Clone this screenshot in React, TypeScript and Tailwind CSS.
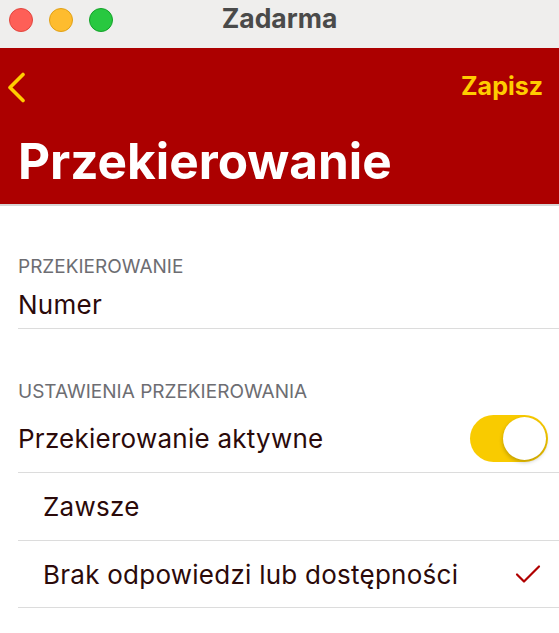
import React from 'react';

// Forwarding settings screen (macOS Catalyst window chrome + iOS style grouped list)

const OPTIONS = [
	{ label: 'Zawsze', checked: false, h: 'h-[68px]' },
	{ label: 'Brak odpowiedzi lub dostępności', checked: true, h: 'h-[67px]' },
];

function Chevron() {
	return (
		<svg width="20" height="31" viewBox="0 0 20 31" fill="none">
			<path d="M17 2.5L4 15.5L17 28.5" stroke="#ffcc00" strokeWidth="3.6" strokeLinecap="round" strokeLinejoin="round" />
		</svg>
	);
}

function Check() {
	return (
		<svg width="26" height="20" viewBox="0 0 26 20" fill="none">
			<path d="M2 10.5L9 17.5L24 2.5" stroke="#b00000" strokeWidth="2.2" strokeLinecap="round" strokeLinejoin="round" />
		</svg>
	);
}

function Toggle({ on }: { on: boolean }) {
	return (
		<div className={`flex h-[47px] w-[78px] items-center rounded-full p-[2px] ${on ? 'justify-end bg-[#f9cb00]' : 'justify-start bg-[#e5e5ea]'}`}>
			<div className="h-[43px] w-[43px] rounded-full bg-white shadow-[0_2px_4px_rgba(0,0,0,0.25)]" />
		</div>
	);
}

export default function App() {
	return (
		<div className="h-[633px] w-full overflow-hidden bg-white font-['Inter',sans-serif]">
			<div className="grid h-[48px] grid-cols-[1fr_auto_1fr] items-start bg-[#efeeed]">
				<div className="flex gap-[16px] pl-[9px] pt-[8px]">
					<span className="h-[24px] w-[24px] rounded-full border border-[#e2463f] bg-[#fe5f57]" />
					<span className="h-[24px] w-[24px] rounded-full border border-[#e1a116] bg-[#febc2e]" />
					<span className="h-[24px] w-[24px] rounded-full border border-[#13a229] bg-[#28c840]" />
				</div>
				<div className="pt-[2px] text-[26.5px] font-bold leading-[32px] text-[#4a4a4a]">Zadarma</div>
				<div />
			</div>

			<div className="border-b-2 border-[#d6d6d6] bg-[#ac0000]">
				<div className="flex h-[78px] items-center justify-between pl-[6px] pr-[16px]">
					<Chevron />
					<span className="text-[25px] font-bold text-[#ffcc00]">Zapisz</span>
				</div>
				<h1 className="h-[78px] pl-[18px] pt-[6px] text-[49.5px] font-bold leading-[58px] text-white">Przekierowanie</h1>
			</div>

			<div className="pl-[18px] text-[26px] tracking-[0.25px] text-[#2b0a0a]">
				<div className="pt-[50px] text-[19px] leading-[22px] tracking-normal text-[#6d6d72]">PRZEKIEROWANIE</div>
				<div className="flex h-[51px] items-center border-b border-[#dcdcdc] pt-[3px]">Numer</div>

				<div className="pt-[52px] text-[19px] leading-[22px] tracking-normal text-[#6d6d72]">USTAWIENIA PRZEKIEROWANIA</div>
				<div className="flex h-[70px] items-center justify-between border-b border-[#dcdcdc] pr-[11px] pt-[2px]">
					<span>Przekierowanie aktywne</span>
					<Toggle on />
				</div>

				{OPTIONS.map((o) => (
					<div key={o.label} className={`flex items-center justify-between border-b border-[#dcdcdc] pl-[25px] pr-[18px] ${o.h}`}>
						<span>{o.label}</span>
						{o.checked && <Check />}
					</div>
				))}
			</div>
		</div>
	);
}
